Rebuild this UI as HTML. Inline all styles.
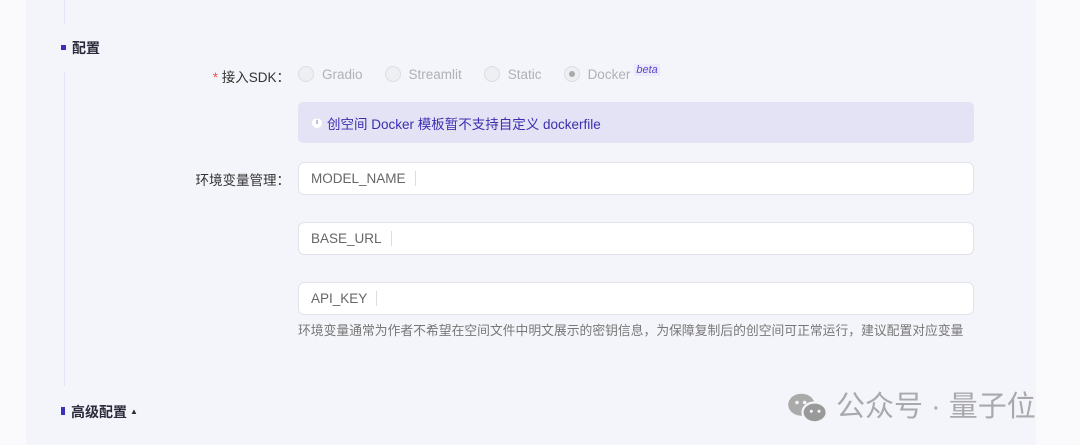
<!DOCTYPE html>
<html><head><meta charset="utf-8"><style>
*{margin:0;padding:0;box-sizing:border-box}
body{width:1080px;height:445px;background:#fafafc;font-family:"Liberation Sans","Noto Sans CJK SC",sans-serif;position:relative;overflow:hidden}
.panel{position:absolute;left:26px;top:0;width:1010px;height:445px;background:#f4f5fa}
.vl{position:absolute;left:64px;width:1px;background:#e3e4f3}
.abs{position:absolute}
.h{font-size:14px;font-weight:bold;color:#2a2a3a}
.sq{display:inline-block;width:5px;height:5px;background:#3b2fc0;margin-right:6px;vertical-align:middle;position:relative;top:-2px}
.lbl{font-size:13.5px;color:#333;text-align:right}
.radio{display:inline-block;width:16px;height:16px;border:1px solid #dcdce2;border-radius:50%;background:#eeeff3;vertical-align:middle;margin-right:8px;position:relative;top:-1px}
.rt{font-size:13.5px;color:#b0b0b5;margin-right:22px}
.inp{position:absolute;left:298px;width:676px;height:33px;background:#fff;border:1px solid #e2e3ea;border-radius:6px;font-size:13.5px;color:#666;padding:8px 12px}
.inp span{border-right:1px solid #ddd;padding-right:9px}
</style></head><body>
<div class="panel"></div>
<div class="vl" style="top:0;height:24px"></div>
<div class="vl" style="top:72px;height:314px"></div>
<div class="abs h" style="left:61px;top:38px"><span class="sq"></span>配置</div>
<div class="abs lbl" style="left:170px;top:66px;width:120px"><span style="color:#e55">*</span> 接入SDK：</div>
<div class="abs" style="left:298px;top:66px;white-space:nowrap">
<span class="radio"></span><span class="rt">Gradio</span><span class="radio"></span><span class="rt">Streamlit</span><span class="radio"></span><span class="rt">Static</span><span class="radio" style="background:#eeeff3"><span style="position:absolute;left:4px;top:4px;width:6px;height:6px;border-radius:50%;background:#aaa"></span></span><span class="rt" style="margin-right:4px">Docker</span><span style="font-size:11px;color:#5a47d0;font-style:italic;position:relative;top:-6px;background:#eceaf8;padding:0 2px">beta</span>
</div>
<div class="abs" style="left:298px;top:102px;width:676px;height:41px;background:#e4e2f5;border-radius:5px;font-size:13.5px;color:#3b2fb0;padding:11px 14px"><span style="display:inline-block;width:10px;height:10px;border-radius:50%;background:#fff;color:#3b2fb0;font-size:7px;text-align:center;line-height:10px;vertical-align:middle;position:relative;top:-2px;margin-right:5px">i</span>创空间 Docker 模板暂不支持自定义 dockerfile</div>
<div class="abs lbl" style="left:170px;top:169px;width:120px">环境变量管理：</div>
<div class="inp" style="top:162px"><span>MODEL_NAME</span></div>
<div class="inp" style="top:222px"><span>BASE_URL</span></div>
<div class="inp" style="top:282px"><span>API_KEY</span></div>
<div class="abs" style="left:298px;top:320px;font-size:12.8px;color:#777;white-space:nowrap">环境变量通常为作者不希望在空间文件中明文展示的密钥信息，为保障复制后的创空间可正常运行，建议配置对应变量</div>
<div class="abs h" style="left:61px;top:402px"><span class="sq" style="width:4px;height:8px"></span>高级配置<span style="font-size:8px;margin-left:3px;position:relative;top:-3px">▲</span></div>
<div class="abs" style="left:786px;top:383px;font-size:29px;color:#a9a9ad;white-space:nowrap"><svg width="44" height="34" viewBox="0 0 40 30" style="vertical-align:middle;margin-right:6px"><ellipse cx="14" cy="12" rx="12" ry="10" fill="#aaa"/><ellipse cx="26" cy="19" rx="11" ry="9" fill="#999" stroke="#f4f5fa" stroke-width="2"/><circle cx="10" cy="10" r="1.6" fill="#f4f5fa"/><circle cx="17" cy="10" r="1.6" fill="#f4f5fa"/><circle cx="23" cy="18" r="1.4" fill="#f4f5fa"/><circle cx="30" cy="18" r="1.4" fill="#f4f5fa"/></svg>公众号 · 量子位</div>
</body></html>
